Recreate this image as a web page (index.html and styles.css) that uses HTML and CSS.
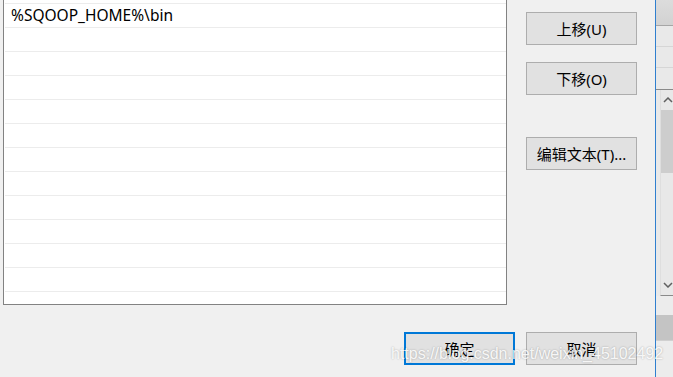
FILE: index.html
```html
<!DOCTYPE html>
<html lang="zh-CN">
<head>
    <meta charset="UTF-8">
    <title>编辑环境变量</title>
    <link rel="stylesheet" href="styles.css">
</head>
<body>
    <div class="screen">
        <div class="dialog">
            <div class="dialog-body">
                <!-- Path list, scrolled so the first row is mostly hidden -->
                <div class="path-list">
                    <div class="path-row">%SPARK_HOME%\bin</div>
                    <div class="path-row">%SQOOP_HOME%\bin</div>
                    <div class="path-row"></div>
                    <div class="path-row"></div>
                    <div class="path-row"></div>
                    <div class="path-row"></div>
                    <div class="path-row"></div>
                    <div class="path-row"></div>
                    <div class="path-row"></div>
                    <div class="path-row"></div>
                    <div class="path-row"></div>
                    <div class="path-row"></div>
                    <div class="path-row"></div>
                    <div class="path-row"></div>
                </div>

                <div class="side-buttons">
                    <button class="btn">上移(U)</button>
                    <button class="btn">下移(O)</button>
                    <button class="btn btn-spaced">编辑文本(T)...</button>
                </div>
            </div>

            <div class="dialog-footer">
                <button class="btn btn-default">确定</button>
                <button class="btn">取消</button>
            </div>
        </div>

        <!-- Window behind the dialog -->
        <div class="behind">
            <div class="behind-head"></div>
            <div class="behind-cell"></div>
            <div class="behind-cell"></div>
            <div class="behind-cell behind-last"></div>
            <div class="scrollbar">
                <svg class="arrow" width="10" height="6" viewBox="0 0 10 6"><path d="M1 5 L5 1 L9 5" fill="none" stroke="#606060" stroke-width="1.5"/></svg>
                <div class="thumb"></div>
                <div class="track"></div>
                <svg class="arrow" width="10" height="6" viewBox="0 0 10 6"><path d="M1 1 L5 5 L9 1" fill="none" stroke="#606060" stroke-width="1.5"/></svg>
            </div>
            <div class="behind-row"></div>
            <div class="behind-band"></div>
            <div class="behind-row behind-tall"></div>
        </div>

        <div class="watermark">https://blog.csdn.net/weixin_45102492</div>
    </div>
</body>
</html>
```

FILE: styles.css
```css
/* Global */
body {
    margin: 0;
    padding: 0;
    background: #f0f0f0;
    font-family: "Noto Sans", "Noto Sans CJK SC", sans-serif;
    font-size: 15px;
    color: #000;
}

.screen {
    position: relative;
    display: flex;
    width: 673px;
    height: 377px;
    overflow: hidden;
}

/* Dialog */
.dialog {
    width: 655px;
    height: 377px;
    border-right: 1px solid #2f7fcf;
    background: #f0f0f0;
    overflow: hidden;
    display: flex;
    flex-direction: column;
}

.dialog-body {
    display: flex;
    align-items: flex-start;
}

.path-list {
    margin-top: -20px;
    margin-left: 3px;
    width: 501px;
    height: 324px;
    padding-left: 1px;
    background: #fff;
    border-left: 1px solid #828282;
    border-right: 1px solid #828282;
    border-bottom: 1px solid #828282;
    overflow: hidden;
}

.path-row {
    height: 23px;
    line-height: 23px;
    padding-left: 6px;
    border-bottom: 1px solid #ececec;
    font-size: 15.5px;
    white-space: nowrap;
}

.side-buttons {
    display: flex;
    flex-direction: column;
    gap: 17px;
    margin-left: 19px;
    padding-top: 12px;
}

.btn {
    width: 111px;
    height: 33px;
    padding: 0;
    margin: 0;
    background: #e1e1e1;
    border: 1px solid #adadad;
    font-family: "Noto Sans", "Noto Sans CJK SC", sans-serif;
    font-size: 15px;
    color: #000;
}

.btn-spaced {
    margin-top: 25px;
}

.btn-default {
    border: 2px solid #0078d7;
}

.dialog-footer {
    display: flex;
    gap: 11px;
    padding-left: 404px;
    margin-top: 27px;
}

/* CSDN watermark over the screenshot */
.watermark {
    position: absolute;
    left: 391px;
    top: 345px;
    font-family: "Liberation Sans", Arial, sans-serif;
    font-size: 16px;
    color: rgba(255, 255, 255, 0.9);
    text-shadow: 0 0 2px rgba(0, 0, 0, 0.3);
    white-space: nowrap;
}

/* Window behind the dialog */
.behind {
    flex: 1;
    display: flex;
    flex-direction: column;
    background: #e9e9e9;
}

.behind-head {
    height: 25px;
    background: linear-gradient(#dcdcdc, #d2d2d2);
    border-bottom: 1px solid #a6a6a6;
}

.behind-cell {
    height: 20px;
    border-bottom: 1px solid #d6d6d6;
}

.behind-last {
    height: 21px;
    border-bottom: 1px solid #8a8a8a;
}

.scrollbar {
    height: 205px;
    margin-left: 4px;
    background: #e8e8e8;
    border-left: 1px solid #dedede;
    display: flex;
    flex-direction: column;
    align-items: flex-end;
    border-bottom: 1px solid #8a8a8a;
}

.arrow {
    margin: 7px 0 7px 0;
}

.thumb {
    width: 12px;
    height: 63px;
    background: #cdcdcd;
}

.track {
    flex: 1;
}

.behind-row {
    height: 19px;
    background: #ececec;
}

.behind-band {
    height: 25px;
    background: #c4c4c4;
}

.behind-tall {
    flex: 1;
    border-top: 1px solid #d0d0d0;
}
```
